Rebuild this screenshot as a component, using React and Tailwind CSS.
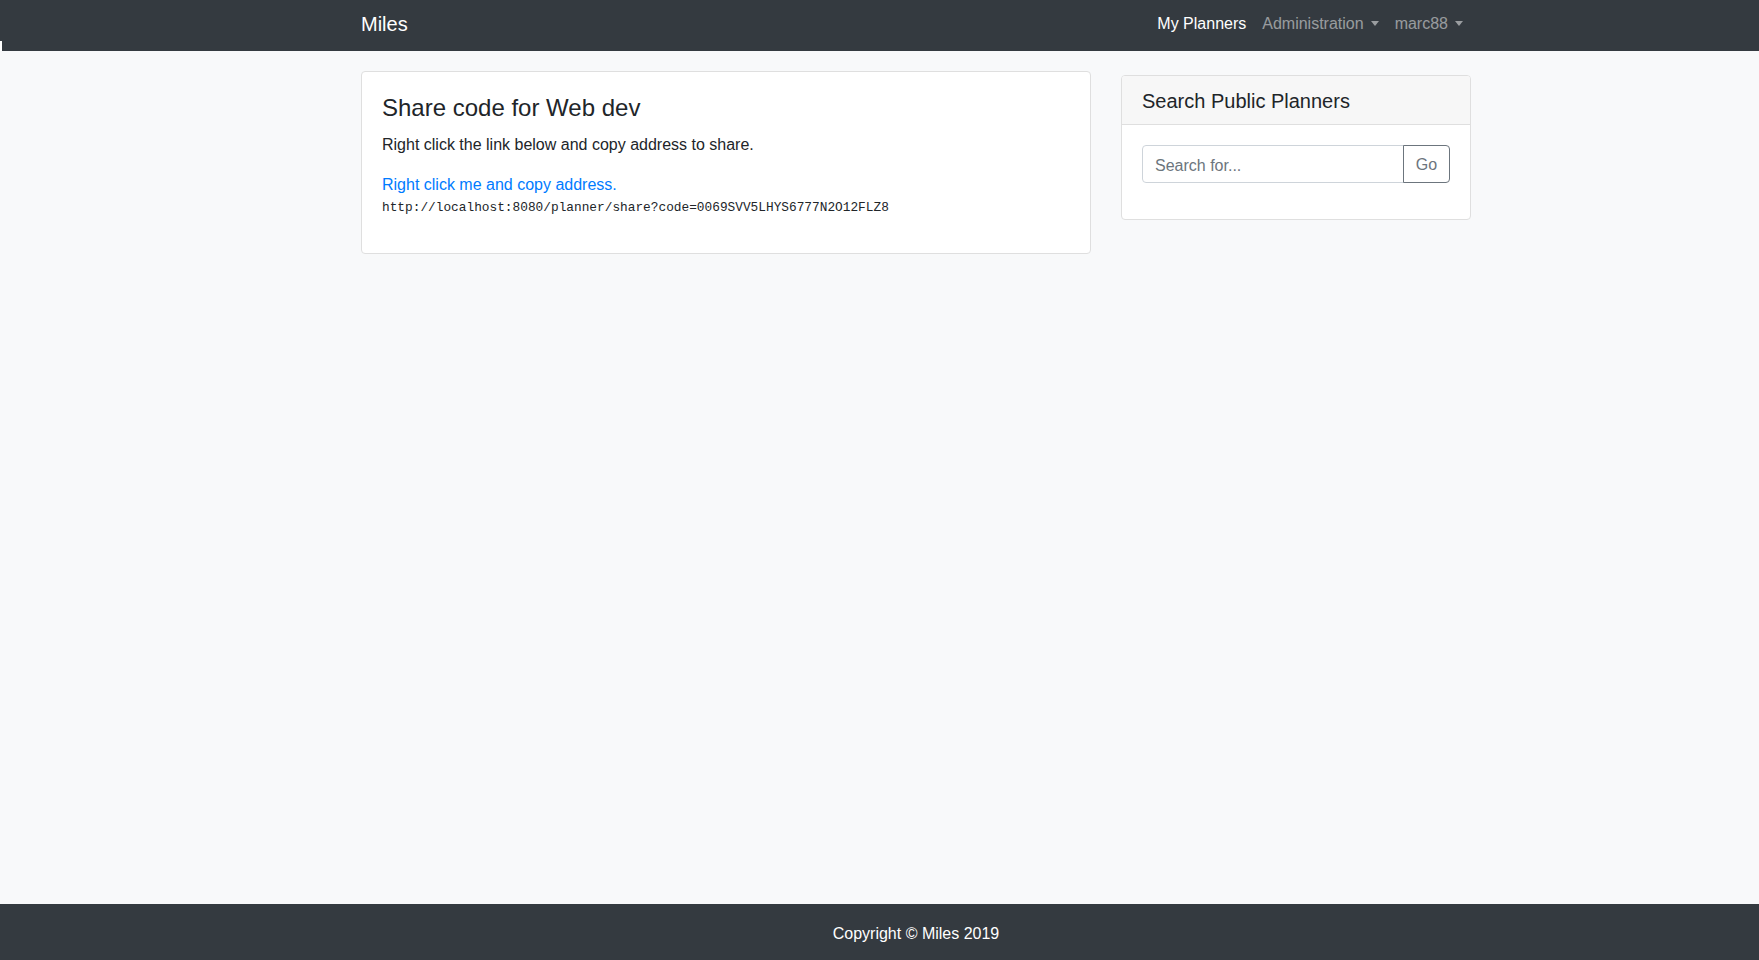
import React from "react";

const sans = "font-['Segoe_UI','Liberation_Sans',Arial,sans-serif]";

function Caret() {
  return (
    <span className="inline-block w-0 h-0 ml-[7px] align-[3px] border-t-[5px] border-x-[4.5px] border-x-transparent border-t-current" />
  );
}

function Navbar() {
  return (
    <nav className="relative h-[51px] bg-[#343a40]">
      <div className="ml-[346px] w-[1140px] px-[15px] h-full pb-[4px] flex items-center justify-between">
        <a className="text-[20px] leading-[30px] text-white">Miles</a>
        <ul className="flex items-center text-[16px] leading-[24px]">
          <li className="px-2 text-white">My Planners</li>
          <li className="px-2 text-white/50">
            Administration
            <Caret />
          </li>
          <li className="px-2 text-white/50">
            marc88
            <Caret />
          </li>
        </ul>
      </div>
      <div className="absolute left-0 top-[41px] w-[2px] h-[10px] bg-white" />
    </nav>
  );
}

function ShareCard() {
  return (
    <div className="w-[730px] mt-[20px] bg-white border border-[#dfdfdf] rounded-[4px] self-start">
      <div className="px-5 pt-5 pb-[35px]">
        <h4 className="text-[24px] leading-[32px] font-medium mb-[9px]">Share code for Web dev</h4>
        <p className="text-[16px] leading-[24px] mb-4">Right click the link below and copy address to share.</p>
        <a className="block text-[16px] leading-[24px] text-[#007bff]">Right click me and copy address.</a>
        <pre className="font-['Liberation_Mono',monospace] text-[12.8px] leading-[21px] text-[#212529]">
          http://localhost:8080/planner/share?code=0069SVV5LHYS6777N2O12FLZ8
        </pre>
      </div>
    </div>
  );
}

function SearchCard() {
  return (
    <div className="w-[350px] mt-[24px] bg-white border border-[#dfdfdf] rounded-[4px] self-start overflow-hidden">
      <div className="bg-[#f7f7f7] border-b border-[#dfdfdf] px-5 pt-[13px] pb-[11px]">
        <h5 className="text-[20px] leading-[24px] font-medium">Search Public Planners</h5>
      </div>
      <div className="p-5">
        <div className="flex h-[38px] mb-4">
          <input
            className="flex-1 min-w-0 border border-[#ced4da] rounded-l-[4px] px-3 pt-[3px] text-[16px] text-[#495057] placeholder:text-[#6c757d] outline-none"
            placeholder="Search for..."
          />
          <button className="w-[47px] border border-[#6c757d] rounded-r-[4px] pt-[2px] text-[16px] text-[#6c757d] -ml-px">
            Go
          </button>
        </div>
      </div>
    </div>
  );
}

export default function App() {
  return (
    <div className={`min-h-screen flex flex-col bg-[#f8f9fa] text-[#212529] ${sans}`}>
      <Navbar />
      <main className="flex-1">
        <div className="ml-[346px] w-[1140px] px-[15px] flex gap-[30px]">
          <ShareCard />
          <SearchCard />
        </div>
      </main>
      <footer className="h-[56px] bg-[#343a40] flex items-center">
        <div className="ml-[346px] w-[1140px] px-[15px] text-center text-white text-[16px] leading-[24px] pt-[3px]">
          Copyright © Miles 2019
        </div>
      </footer>
    </div>
  );
}
